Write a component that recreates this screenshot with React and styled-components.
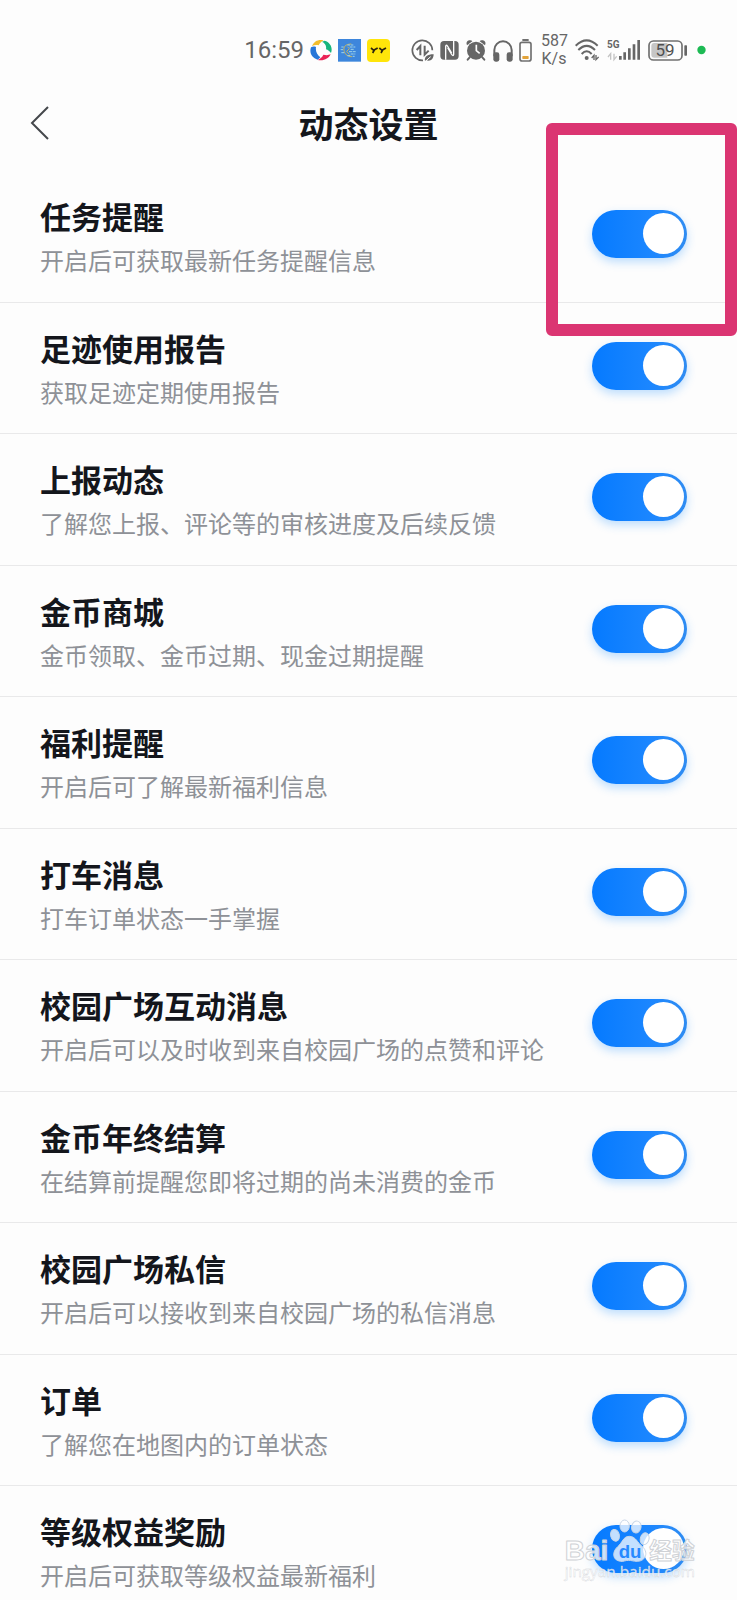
import React, { useState } from "react";
import styled, { createGlobalStyle } from "styled-components";

const GlobalStyle = createGlobalStyle`
  * { box-sizing: border-box; }
  body {
    margin: 0;
    background: #fdfdfd;
    font-family: "Noto Sans CJK SC", "Noto Sans", sans-serif;
  }
`;

const Page = styled.main`
  width: 100%;
`;

const StatusBar = styled.div`
  display: flex;
  align-items: center;
  justify-content: flex-end;
  height: 100px;
  padding-right: 31px;
  color: #666;
  font-family: Roboto, sans-serif;
`;

const StatusGroup = styled.div`
  display: flex;
  align-items: center;
  gap: ${(p) => p.$gap}px;
  margin-left: ${(p) => p.$before || 0}px;
`;

const Clock = styled.time`
  font-size: 24px;
  line-height: 24px;
`;

const Speed = styled.div`
  width: 26px;
  font-size: 16px;
  line-height: 18px;
  text-align: center;
`;

const StatusIcon = styled.svg`
  display: block;
  flex: none;
  height: 24px;
  width: ${(p) => p.$w}px;
`;

const Header = styled.header`
  display: grid;
  grid-template-columns: 60px 1fr 60px;
  align-items: center;
  height: 46px;
  margin-bottom: 25px;
`;

const BackButton = styled.button`
  display: flex;
  align-items: center;
  height: 46px;
  padding: 0 0 0 30px;
  border: 0;
  background: none;
  cursor: pointer;
`;

const Title = styled.h1`
  margin: 0;
  font-size: 35px;
  line-height: 44px;
  font-weight: 700;
  color: #14161c;
  text-align: center;
`;

const Content = styled.section`
  position: relative;
`;

const List = styled.ul`
  margin: 0;
  padding: 0;
  list-style: none;
`;

const Row = styled.li`
  display: flex;
  align-items: flex-start;
  justify-content: space-between;
  padding: 23px 50px 20px 40px;
  border-bottom: 1px solid #e9e9ea;

  &:nth-child(even) { padding-bottom: 19px; }
  &:last-child { padding-bottom: 2px; border-bottom: 0; }
`;

const RowLabel = styled.label`
  display: block;
  font-size: 31px;
  line-height: 44px;
  font-weight: 700;
  color: #14161c;
`;

const RowHint = styled.p`
  margin: 0;
  font-size: 24px;
  line-height: 44px;
  font-weight: 400;
  color: #8e9197;
`;

const Switch = styled.input`
  appearance: none;
  position: relative;
  flex: none;
  width: 95px;
  height: 48px;
  margin: 16px 0 0;
  border-radius: 24px;
  background: ${(p) => (p.checked ? "linear-gradient(90deg, #057aff, #1b86ff 60%, #2f8cf2)" : "#d5d8dd")};
  box-shadow: 0 4px 10px ${(p) => (p.checked ? "rgba(40, 150, 255, 0.3)" : "transparent")};
  cursor: pointer;

  &::before {
    content: "";
    position: absolute;
    top: 3px;
    left: ${(p) => (p.checked ? 51 : 3)}px;
    width: 41px;
    height: 41px;
    border-radius: 50%;
    background: #fff;
  }
`;

const Highlight = styled.div`
  position: absolute;
  top: -48px;
  right: 0;
  width: 191px;
  height: 213px;
  border: 12px solid #db3572;
  border-radius: 6px;
  pointer-events: none;
`;

const Watermark = styled.svg`
  position: absolute;
  right: 37px;
  bottom: 17px;
  width: 140px;
  height: 66px;
  pointer-events: none;
`;

const items = [
  ["任务提醒", "开启后可获取最新任务提醒信息"],
  ["足迹使用报告", "获取足迹定期使用报告"],
  ["上报动态", "了解您上报、评论等的审核进度及后续反馈"],
  ["金币商城", "金币领取、金币过期、现金过期提醒"],
  ["福利提醒", "开启后可了解最新福利信息"],
  ["打车消息", "打车订单状态一手掌握"],
  ["校园广场互动消息", "开启后可以及时收到来自校园广场的点赞和评论"],
  ["金币年终结算", "在结算前提醒您即将过期的尚未消费的金币"],
  ["校园广场私信", "开启后可以接收到来自校园广场的私信消息"],
  ["订单", "了解您在地图内的订单状态"],
  ["等级权益奖励", "开启后可获取等级权益最新福利"],
];

function SettingRow({ id, title, hint }) {
  const [on, setOn] = useState(true);
  return (
    <Row>
      <div>
        <RowLabel htmlFor={id}>{title}</RowLabel>
        <RowHint id={id + "-hint"}>{hint}</RowHint>
      </div>
      <Switch
        id={id}
        type="checkbox"
        role="switch"
        aria-describedby={id + "-hint"}
        checked={on}
        onChange={(e) => setOn(e.target.checked)}
      />
    </Row>
  );
}

const BrowserIcon = () => (
  <StatusIcon $w={22} viewBox="230 39 66 72">
    <path d="M236 63C242 48 256 42 271 46C264 50 259 55 256 61C249 59 243 60 236 63Z" fill="#f3bd2b" />
    <path d="M274 47C291 52 299 68 293 84C289 79 284 75 278 73C280 62 275 54 266 50Z" fill="#17b57c" />
    <path d="M292 88C286 101 271 109 253 105C261 101 267 96 270 89C278 91 285 91 292 88Z" fill="#ea2456" />
    <path d="M253 104C236 99 227 84 233 67C238 64 243 64 248 66C246 79 251 90 261 97C259 100 256 102 253 104Z" fill="#2876d8" />
  </StatusIcon>
);

const MapAppIcon = () => (
  <StatusIcon $w={23} viewBox="312 39 69 72">
    <rect x="312" y="42" width="69" height="68" fill="#3d86dc" />
    <g fill="none" strokeWidth="3">
      <path d="M352 57C334 57 328 66 330 76S338 95 354 95M340 65L346 71L338 79L346 88" stroke="#c9b65e" />
      <path d="M340 60H358M347 66H364M350 73H360M345 80H367M350 87H364M340 92H350M356 94H362M322 66H329M320 74H327M322 83H331" stroke="#9fd4ea" strokeDasharray="9 2" />
    </g>
  </StatusIcon>
);

const YyIcon = () => (
  <StatusIcon $w={23} viewBox="396 39 69 72">
    <rect x="396" y="42" width="69" height="69" rx="12" fill="#ffe50a" />
    <path d="M408 69L416 76L428 69M418 75L413 84M433 69L441 76L453 69M443 75L438 84" fill="none" stroke="#2b2410" strokeWidth="5" />
  </StatusIcon>
);

const DataIcon = () => (
  <StatusIcon $w={23} viewBox="34 39 69 72">
    <g fill="none" stroke="#666" strokeWidth="5">
      <path d="M98 76A30 30 0 1 0 70 106" />
      <path d="M62 91V63L51 75M75 62V89L87 77" strokeWidth="6" />
    </g>
    <path d="M76 108C73 96 83 88 102 88C102 102 92 111 80 106Z" fill="#666" />
    <path d="M76 110L93 95" stroke="#fdfdfd" strokeWidth="3" />
  </StatusIcon>
);

const NfcIcon = () => (
  <StatusIcon $w={19} viewBox="123 39 57 72">
    <rect x="124" y="48" width="55" height="56" rx="11" fill="#666" />
    <path d="M140 104V64Q141 57 146 64L158 84M164 48V88Q163 95 158 88L146 68" fill="none" stroke="#fdfdfd" strokeWidth="4" />
  </StatusIcon>
);

const AlarmIcon = () => (
  <StatusIcon $w={22} viewBox="201 39 66 72">
    <circle cx="234" cy="77" r="27" fill="#666" />
    <path d="M207 61Q202 50 213 46Q220 44 223 49ZM261 61Q266 50 255 46Q248 44 245 49Z" fill="#666" />
    <path d="M215 97L209 104M253 97L259 104" stroke="#666" strokeWidth="6" strokeLinecap="round" />
    <path d="M235 59V77L245 85" fill="none" stroke="#fdfdfd" strokeWidth="5" />
  </StatusIcon>
);

const HeadphonesIcon = () => (
  <StatusIcon $w={20} viewBox="282 39 60 72">
    <path d="M286 94V75A26 26 0 0 1 338 75V94" fill="none" stroke="#666" strokeWidth="6" />
    <rect x="283" y="82" width="18" height="28" rx="7" fill="#666" />
    <rect x="323" y="82" width="18" height="28" rx="7" fill="#666" />
  </StatusIcon>
);

const DeviceBatteryIcon = () => (
  <StatusIcon $w={13} viewBox="352 39 39 72">
    <rect x="362" y="42" width="19" height="6" fill="#707070" />
    <rect x="355" y="52" width="33" height="56" rx="6" fill="none" stroke="#707070" strokeWidth="5" />
    <rect x="362" y="93" width="19" height="9" rx="2" fill="#e2a33a" />
  </StatusIcon>
);

const WifiIcon = () => (
  <StatusIcon $w={24} viewBox="36 39 72 72">
    <g fill="none" stroke="#666" strokeWidth="6">
      <path d="M38 62Q71 30 104 62" />
      <path d="M46 75Q71 50 96 75" />
      <path d="M56 87Q71 71 86 87" />
    </g>
    <circle cx="71" cy="99" r="6" fill="#666" />
    <path d="M86 99L93 91V105M99 90V104L107 96" fill="none" stroke="#666" strokeWidth="4" />
  </StatusIcon>
);

const SignalIcon = () => (
  <StatusIcon $w={33} viewBox="124 39 99 72">
    <text x="124" y="70" fontSize="30" fontWeight="700" fontFamily="Roboto, sans-serif" fill="#666">5G</text>
    <path d="M127 96L135 86V104M145 86V104L153 94" fill="none" stroke="#c4c4c4" strokeWidth="4" />
    <path d="M164 93V104M177 82V104M191 70V104M205 58V104M219 45V104" stroke="#666" strokeWidth="8" />
  </StatusIcon>
);

const BatteryIcon = () => (
  <StatusIcon $w={39} viewBox="249 39 117 72">
    <rect x="252" y="48" width="99" height="57" rx="13" fill="none" stroke="#707070" strokeWidth="5" />
    <path d="M268 54H307V98H268Q259 98 259 89V63Q259 54 268 54Z" fill="#c6c6c6" />
    <rect x="358" y="61" width="8" height="31" rx="2" fill="#666" />
    <text x="300" y="94" textAnchor="middle" fontSize="51" fontFamily="Roboto, sans-serif" fill="#505050">59</text>
  </StatusIcon>
);

const ActiveDot = () => (
  <StatusIcon $w={11} viewBox="-2 0 11 24">
    <circle cx="4.5" cy="12" r="4.2" fill="#1dba54" />
  </StatusIcon>
);

const BrandMark = () => (
  <Watermark viewBox="60 80 420 198" role="img" aria-label="Baidu 经验">
    <g fill="#fff" fillOpacity="0.8" stroke="#cfd2d6" strokeWidth="3" strokeLinejoin="round">
      <text x="74" y="212" fontFamily="Liberation Sans, sans-serif" fontWeight="700" fontSize="84">Bai</text>
      <text x="328" y="210" fontFamily="Noto Sans CJK SC, sans-serif" fontWeight="700" fontSize="68">经验</text>
      <text x="74" y="264" fontFamily="Open Sans, sans-serif" fontSize="46" strokeWidth="1">jingyan.baidu.com</text>
    </g>
    <g fill="#fff" fillOpacity="0.75" stroke="#c9d6e6" strokeWidth="3">
      <ellipse cx="225" cy="138" rx="13" ry="18" transform="rotate(-15 225 138)" />
      <ellipse cx="254" cy="110" rx="14" ry="18" />
      <ellipse cx="289" cy="113" rx="14" ry="18" transform="rotate(12 289 113)" />
      <ellipse cx="314" cy="148" rx="13" ry="18" transform="rotate(15 314 148)" />
      <path d="M268 141C287 141 292 160 306 171C326 187 319 215 292 216C279 216 275 213 266 213C255 213 252 217 242 216C216 213 216 187 233 172C248 160 249 141 268 141Z" />
    </g>
    <text x="236" y="207" fontFamily="Liberation Sans, sans-serif" fontWeight="700" fontSize="56" fill="#278aff">du</text>
  </Watermark>
);

export default function App() {
  return (
    <Page>
      <GlobalStyle />
      <StatusBar>
        <StatusGroup $gap={6}>
          <Clock>16:59</Clock>
          <BrowserIcon />
          <MapAppIcon />
          <YyIcon />
        </StatusGroup>
        <StatusGroup $gap={6} $before={21}>
          <DataIcon />
          <NfcIcon />
          <AlarmIcon />
          <HeadphonesIcon />
          <DeviceBatteryIcon />
        </StatusGroup>
        <StatusGroup $gap={8} $before={9}>
          <Speed>587 K/s</Speed>
          <WifiIcon />
          <SignalIcon />
          <BatteryIcon />
          <ActiveDot />
        </StatusGroup>
      </StatusBar>
      <Header>
        <BackButton aria-label="返回">
          <svg width="19" height="34" viewBox="0 0 19 34" fill="none" stroke="#44474b" strokeWidth="2">
            <path d="M18 1L2 17L18 33" />
          </svg>
        </BackButton>
        <Title>动态设置</Title>
      </Header>
      <Content>
        <List>
          {items.map(([title, hint], i) => (
            <SettingRow key={title} id={"setting-" + i} title={title} hint={hint} />
          ))}
        </List>
        <Highlight />
        <BrandMark />
      </Content>
    </Page>
  );
}
